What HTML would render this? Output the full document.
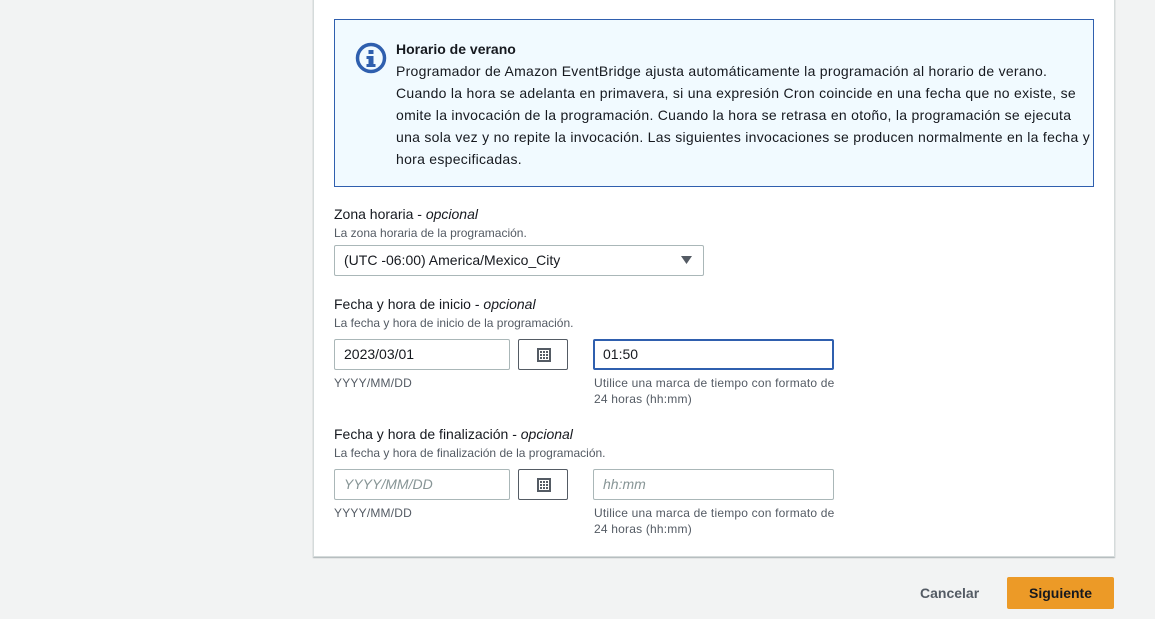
<!DOCTYPE html>
<html><head><meta charset="utf-8"><style>
*{margin:0;padding:0;box-sizing:border-box}
body{width:1155px;height:619px;background:#f2f3f3;font-family:"Liberation Sans",sans-serif;color:#16191f;position:relative;overflow:hidden}
.abs{position:absolute}
.panel{left:313px;top:-2px;width:802px;height:559px;background:#fff;border:1px solid #d5dbdb;box-shadow:0 1px 1px rgba(0,28,36,.3)}
.info{left:334px;top:19px;width:760px;height:168px;background:#f1faff;border:1px solid #2f5fae}
.info .t{position:absolute;left:61px;top:18px;font-size:14px;line-height:22px;width:720px;letter-spacing:0.28px;white-space:nowrap}
.info .t b{letter-spacing:0}
.lbl{font-size:14px;color:#16191f}
.lbl i{font-style:italic}
.desc{font-size:12px;color:#545b64}
.inp{border:1px solid #aab7b8;background:#fff;font-size:14px;padding-left:9px;line-height:29px;height:31px;border-radius:2px}
.ph{color:#879596;font-style:italic}
.cal{border:1px solid #545b64;background:#fff;border-radius:2px;width:50px;height:31px}
.cal div{position:absolute;left:18px;top:8px;width:14px;height:14px;border:2px solid #545b64;background:
linear-gradient(#545b64,#545b64) 1px 1px/2px 2px no-repeat,linear-gradient(#545b64,#545b64) 4px 1px/2px 2px no-repeat,linear-gradient(#545b64,#545b64) 7px 1px/2px 2px no-repeat,linear-gradient(#545b64,#545b64) 1px 4px/2px 2px no-repeat,linear-gradient(#545b64,#545b64) 4px 4px/2px 2px no-repeat,linear-gradient(#545b64,#545b64) 7px 4px/2px 2px no-repeat,linear-gradient(#545b64,#545b64) 1px 7px/2px 2px no-repeat,linear-gradient(#545b64,#545b64) 4px 7px/2px 2px no-repeat,linear-gradient(#545b64,#545b64) 7px 7px/2px 2px no-repeat}
.hint{font-size:12px;color:#545b64;line-height:16px;letter-spacing:0.2px}
</style></head><body>
<div class="abs panel"></div>
<div class="abs info">
<svg class="abs" style="left:20px;top:22px" width="32" height="32" viewBox="0 0 32 32"><circle cx="16" cy="16" r="13.5" fill="none" stroke="#2f5fae" stroke-width="3.5"/><rect x="13.5" y="8" width="5" height="4" fill="#2f5fae"/><path d="M11.5 14h7v8h2v3h-9v-3h2v-5h-2z" fill="#2f5fae"/></svg>
<div class="t"><b>Horario de verano</b><br>Programador de Amazon EventBridge ajusta automáticamente la programación al horario de verano.<br>Cuando la hora se adelanta en primavera, si una expresión Cron coincide en una fecha que no existe, se<br>omite la invocación de la programación. Cuando la hora se retrasa en otoño, la programación se ejecuta<br>una sola vez y no repite la invocación. Las siguientes invocaciones se producen normalmente en la fecha y<br>hora especificadas.</div>
</div>

<div class="abs lbl" style="left:334px;top:206px">Zona horaria - <i>opcional</i></div>
<div class="abs desc" style="left:334px;top:226px">La zona horaria de la programación.</div>
<div class="abs inp" style="left:334px;top:245px;width:370px">(UTC -06:00) America/Mexico_City</div>
<svg class="abs" style="left:681px;top:256px" width="11" height="9"><path d="M0 0h11L5.5 8z" fill="#545b64"/></svg>

<div class="abs lbl" style="left:334px;top:296px">Fecha y hora de inicio - <i>opcional</i></div>
<div class="abs desc" style="left:334px;top:316px">La fecha y hora de inicio de la programación.</div>
<div class="abs inp" style="left:334px;top:339px;width:176px">2023/03/01</div>
<div class="abs cal" style="left:518px;top:339px"><div></div></div>
<div class="abs inp" style="left:593px;top:339px;width:241px;border:2px solid #2f5fae;padding-left:8px;line-height:27px">01:50</div>
<div class="abs hint" style="left:334px;top:375px">YYYY/MM/DD</div>
<div class="abs hint" style="left:594px;top:375px">Utilice una marca de tiempo con formato de<br>24 horas (hh:mm)</div>

<div class="abs lbl" style="left:334px;top:426px">Fecha y hora de finalización - <i>opcional</i></div>
<div class="abs desc" style="left:334px;top:446px">La fecha y hora de finalización de la programación.</div>
<div class="abs inp ph" style="left:334px;top:469px;width:176px">YYYY/MM/DD</div>
<div class="abs cal" style="left:518px;top:469px"><div></div></div>
<div class="abs inp ph" style="left:593px;top:469px;width:241px">hh:mm</div>
<div class="abs hint" style="left:334px;top:505px">YYYY/MM/DD</div>
<div class="abs hint" style="left:594px;top:505px">Utilice una marca de tiempo con formato de<br>24 horas (hh:mm)</div>

<div class="abs" style="left:920px;top:585px;font-size:14px;font-weight:bold;color:#545b64">Cancelar</div>
<div class="abs" style="left:1007px;top:577px;width:107px;height:32px;background:#ec9a27;border-radius:2px;font-size:14px;font-weight:bold;color:#16191f;text-align:center;line-height:32px">Siguiente</div>
</body></html>
